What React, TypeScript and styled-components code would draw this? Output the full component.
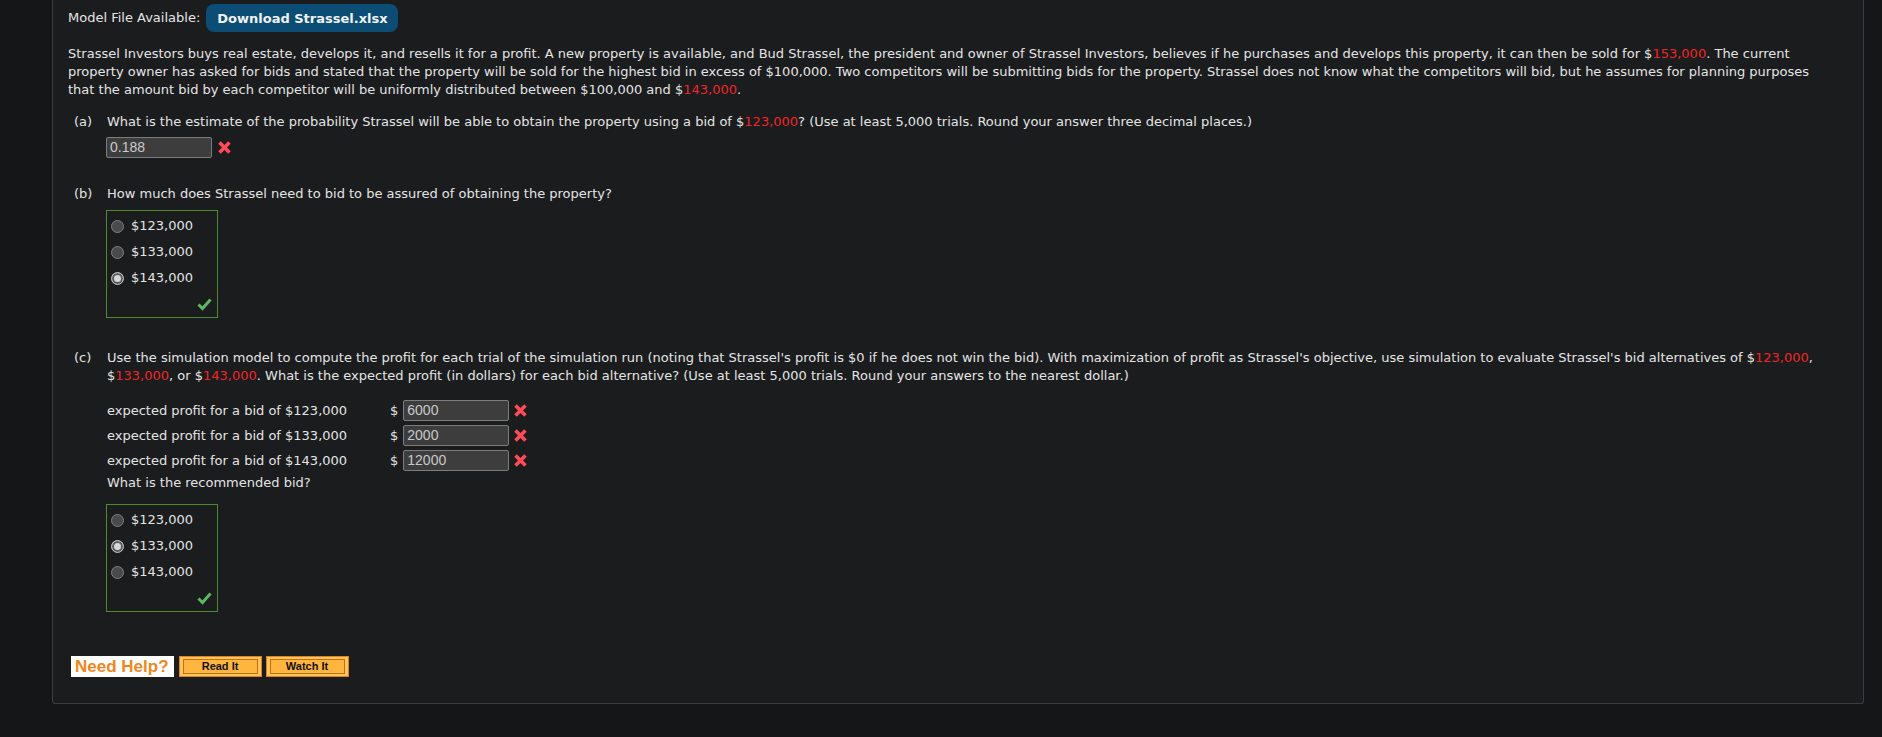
import styled, { createGlobalStyle } from "styled-components"


const GlobalStyle = createGlobalStyle`
    body {
        margin: 0;
        background: #151618;
        font-family: "DejaVu Sans", Verdana, sans-serif;
        font-size: 13px;
        color: #e4e4e4;
    }
`

const Page = styled.div`
    padding: 0 18px 34px 52px;
`

const Panel = styled.div`
    background: #1b1c1e;
    border: 1px solid #3c3d40;
    border-top: none;
    border-radius: 0 0 3px 3px;
    padding: 4px 30px 26px 15px;
    line-height: 18px;
`

const Header = styled.div`
    display: flex;
    align-items: center;
    gap: 6px;
    height: 28px;
`

const DownloadButton = styled.button`
    height: 28px;
    padding: 0 10px 0 11px;
    border: none;
    border-radius: 8px;
    background: #0b4d75;
    color: #f2f2f2;
    font-family: "DejaVu Sans", Verdana, sans-serif;
    font-weight: 700;
    font-size: 13px;
`

const Intro = styled.p`
    margin: 13px 0 0 0;
`

const Red = styled.span`
    color: #f22525;
`

const Question = styled.div<{ $top: number }>`
    display: grid;
    grid-template-columns: 33px 1fr;
    padding-left: 6px;
    margin-top: ${p => p.$top}px;
`

const Answer = styled.div<{ $top: number }>`
    margin: ${p => p.$top}px 0 0 38px;
    display: flex;
    align-items: center;
    gap: 5px;
`

const TextInput = styled.div`
    box-sizing: border-box;
    width: 106px;
    height: 21px;
    border: 1px solid #7d7d7d;
    border-radius: 2px;
    background: #3d3d3e;
    color: #c9c9c9;
    font-family: "Liberation Sans", Arial, sans-serif;
    font-size: 14px;
    line-height: 19px;
    padding-left: 3px;
`

const ChoiceBox = styled.div<{ $top: number }>`
    box-sizing: border-box;
    width: 112px;
    margin: ${p => p.$top}px 0 0 38px;
    border: 1px solid #4f8a2c;
    padding: 2px 5px 6px 4px;
    display: flex;
    flex-direction: column;
`

const Choice = styled.label`
    display: flex;
    align-items: center;
    gap: 7px;
    height: 26px;
`

const RadioDot = styled.span<{ $checked?: boolean }>`
    box-sizing: border-box;
    width: 13px;
    height: 13px;
    border-radius: 50%;
    border: 1px solid ${p => (p.$checked ? "#b8b8b8" : "#808080")};
    background: ${p => (p.$checked ? "#d8d8d8" : "#4a4a4a")};
    box-shadow: ${p => (p.$checked ? "inset 0 0 0 2px #5a5a5a" : "none")};
`

const CheckRow = styled.div`
    display: flex;
    justify-content: flex-end;
    margin-top: 7px;
    height: 13px;
`

const ProfitTable = styled.div`
    margin: 13px 0 0 39px;
`

const ProfitRow = styled.div`
    display: flex;
    align-items: center;
    height: 25px;
`

const ProfitLabel = styled.span`
    width: 283px;
`

const Dollar = styled.span`
    margin-right: 5px;
`

const MarkSlot = styled.span`
    display: flex;
    margin-left: 4px;
`

const Prompt = styled.div`
    margin-top: 1px;
`

const HelpRow = styled.div`
    display: flex;
    align-items: center;
    gap: 5px;
    margin: 44px 0 0 3px;
`

const NeedHelp = styled.span`
    background: #ffffff;
    color: #f0871c;
    font-family: "Liberation Sans", Arial, sans-serif;
    font-weight: 700;
    font-size: 17px;
    line-height: 21px;
    height: 21px;
    padding: 0 5px 0 4px;
`

const HelpButton = styled.button`
    box-sizing: border-box;
    width: 83px;
    height: 21px;
    padding: 2px 3px;
    border: 1px solid #de8124;
    background: #ffc458;
    margin-right: -1px;
`

const HelpInner = styled.span`
    box-sizing: border-box;
    display: block;
    height: 100%;
    border: 1px solid #b9721f;
    background: #ffb53e;
    color: #111;
    font-family: "Liberation Sans", Arial, sans-serif;
    font-weight: 700;
    font-size: 11px;
    line-height: 13px;
`

const WrongMark = () => (
    <svg width="15" height="15" viewBox="0 0 15 15">
        <path d="M2.5 2.5 L12.5 12.5 M12.5 2.5 L2.5 12.5" stroke="#ff4a58" strokeWidth="3.6" />
    </svg>
)

const RightMark = () => (
    <svg width="15" height="13" viewBox="0 0 15 13">
        <path d="M1.5 6.5 L5.5 10.5 L13.5 1.5" stroke="#5cb85c" strokeWidth="3" fill="none" />
    </svg>
)

const bids = ["$123,000", "$133,000", "$143,000"]

const Choices = ({ top, picked }: { top: number; picked: number }) => (
    <ChoiceBox $top={top}>
        {bids.map((b, i) => (
            <Choice key={b}>
                <RadioDot $checked={i === picked} />
                {b}
            </Choice>
        ))}
        <CheckRow>
            <RightMark />
        </CheckRow>
    </ChoiceBox>
)

const profits = [
    { bid: "$123,000", value: "6000" },
    { bid: "$133,000", value: "2000" },
    { bid: "$143,000", value: "12000" },
]

const App = (): React.JSX.Element => {
    return (
        <Page>
            <GlobalStyle />
            <Panel>
                <Header>
                    <span>Model File Available:</span>
                    <DownloadButton>Download Strassel.xlsx</DownloadButton>
                </Header>

                <Intro>
                    Strassel Investors buys real estate, develops it, and resells it for a profit. A new property is available, and Bud Strassel, the president and owner of Strassel Investors, believes if he purchases and develops this property, it can then be sold for $<Red>153,000</Red>. The current property owner has asked for bids and stated that the property will be sold for the highest bid in excess of $100,000. Two competitors will be submitting bids for the property. Strassel does not know what the competitors will bid, but he assumes for planning purposes that the amount bid by each competitor will be uniformly distributed between $100,000 and $<Red>143,000</Red>.
                </Intro>

                <Question $top={14}>
                    <span>(a)</span>
                    <span>What is the estimate of the probability Strassel will be able to obtain the property using a bid of $<Red>123,000</Red>? (Use at least 5,000 trials. Round your answer three decimal places.)</span>
                </Question>
                <Answer $top={6}>
                    <TextInput>0.188</TextInput>
                    <WrongMark />
                </Answer>

                <Question $top={27}>
                    <span>(b)</span>
                    <span>How much does Strassel need to bid to be assured of obtaining the property?</span>
                </Question>
                <Choices top={7} picked={2} />

                <Question $top={31}>
                    <span>(c)</span>
                    <span>Use the simulation model to compute the profit for each trial of the simulation run (noting that Strassel's profit is $0 if he does not win the bid). With maximization of profit as Strassel's objective, use simulation to evaluate Strassel's bid alternatives of $<Red>123,000</Red>, $<Red>133,000</Red>, or $<Red>143,000</Red>. What is the expected profit (in dollars) for each bid alternative? (Use at least 5,000 trials. Round your answers to the nearest dollar.)</span>
                </Question>
                <ProfitTable>
                    {profits.map(p => (
                        <ProfitRow key={p.bid}>
                            <ProfitLabel>expected profit for a bid of {p.bid}</ProfitLabel>
                            <Dollar>$</Dollar>
                            <TextInput>{p.value}</TextInput>
                            <MarkSlot><WrongMark /></MarkSlot>
                        </ProfitRow>
                    ))}
                    <Prompt>What is the recommended bid?</Prompt>
                </ProfitTable>
                <Choices top={12} picked={1} />

                <HelpRow>
                    <NeedHelp>Need Help?</NeedHelp>
                    <HelpButton><HelpInner>Read It</HelpInner></HelpButton>
                    <HelpButton><HelpInner>Watch It</HelpInner></HelpButton>
                </HelpRow>
            </Panel>
        </Page>
    )
}

export default App
